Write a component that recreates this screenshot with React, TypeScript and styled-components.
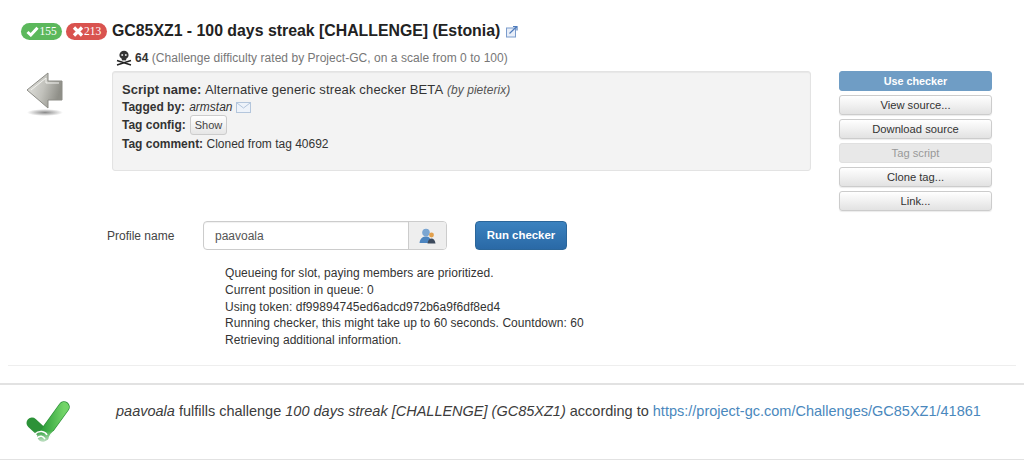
import React from "react";
import styled, { createGlobalStyle } from "styled-components";

const GlobalStyle = createGlobalStyle`
  html, body {
    margin: 0;
    padding: 0;
    background: #fff;
    font-family: "Liberation Sans", Arial, sans-serif;
    font-size: 12px;
    color: #333;
  }
`;

const Page = styled.div`
  width: 1024px;
  height: 460px;
  overflow: hidden;
  box-sizing: border-box;
  padding-top: 22px;
`;

const TitleRow = styled.div`
  display: flex;
  align-items: center;
  height: 18px;
  padding-left: 21px;
`;

const Badge = styled.span<{ $bg: string }>`
  display: inline-flex;
  align-items: center;
  justify-content: center;
  gap: 0;
  width: 41px;
  height: 17px;
  margin-right: 4px;
  border-radius: 9px;
  background: ${(p) => p.$bg};
  color: #fff;
  font-family: "Liberation Serif", serif;
  font-size: 11.5px;
`;

const Title = styled.h1`
  margin: 0 6px 0 1px;
  font-size: 15.85px;
  line-height: 18px;
  font-weight: 700;
  color: #222;
`;

const DifficultyRow = styled.div`
  display: flex;
  align-items: center;
  gap: 3px;
  height: 16px;
  margin-top: 10px;
  padding-left: 116px;
  color: #777;
  letter-spacing: 0.04px;
`;

const Score = styled.b`
  color: #333;
`;

const TopRow = styled.div`
  display: flex;
  margin-top: 5px;
  padding-left: 24px;
`;

const ArrowCol = styled.div`
  width: 88px;
  padding-top: 1px;
`;

const Well = styled.div`
  box-sizing: border-box;
  width: 699px;
  height: 100px;
  padding: 9px 9px 0;
  background: #f3f3f3;
  border: 1px solid #e3e3e3;
  border-radius: 3px;
  box-shadow: inset 0 1px 1px rgba(0, 0, 0, 0.05);
  line-height: 17px;
`;

const ScriptLine = styled.div`
  height: 18px;
  line-height: 17px;
  font-size: 13px;
  letter-spacing: 0.05px;
`;

const ScriptValue = styled.span`
  letter-spacing: 0.15px;
`;

const ScriptBy = styled.i`
  font-size: 12px;
  color: #555;
  letter-spacing: 0.05px;
`;

const WellLine = styled.div`
  display: flex;
  align-items: center;
  gap: 4px;
  min-height: 17px;
`;

const ConfigLine = styled(WellLine)`
  margin: -1px 0 1px;
`;

const ShowButton = styled.span`
  display: inline-block;
  box-sizing: border-box;
  height: 20px;
  padding: 0 4px;
  line-height: 19px;
  font-size: 11px;
  color: #444;
  background: linear-gradient(#fff, #e6e6e6);
  border: 1px solid #ccc;
  border-radius: 3px;
`;

const SideCol = styled.div`
  display: flex;
  flex-direction: column;
  gap: 4px;
  width: 153px;
  margin-left: 28px;
`;

const SideButton = styled.div<{ $variant?: "primary" | "disabled" }>`
  box-sizing: border-box;
  height: 20px;
  line-height: 18px;
  text-align: center;
  font-size: ${(p) => (p.$variant === "primary" ? "10.8px" : "11.2px")};
  border-radius: 3px;
  border: 1px solid
    ${(p) => (p.$variant === "primary" ? "#6f9dc5" : p.$variant === "disabled" ? "#e0e0e0" : "#ccc")};
  color: ${(p) => (p.$variant === "primary" ? "#fff" : p.$variant === "disabled" ? "#999" : "#333")};
  font-weight: ${(p) => (p.$variant === "primary" ? 700 : 400)};
  background: ${(p) =>
    p.$variant === "primary"
      ? "#6f9dc5"
      : p.$variant === "disabled"
        ? "#e8e8e8"
        : "linear-gradient(#fff, #e2e2e2)"};
  box-shadow: ${(p) => (p.$variant ? "none" : "0 1px 1px rgba(0,0,0,0.08)")};
`;

const FormRow = styled.div`
  display: flex;
  align-items: center;
  height: 29px;
  margin-top: 10px;
  padding-left: 107px;
`;

const ProfileLabel = styled.label`
  width: 96px;
  color: #444;
`;

const InputGroup = styled.div`
  display: flex;
  width: 244px;
  height: 29px;
  box-sizing: border-box;
  border: 1px solid #ccc;
  border-radius: 4px;
  overflow: hidden;
  box-shadow: inset 0 1px 1px rgba(0, 0, 0, 0.06);
`;

const ProfileValue = styled.div`
  flex: 1;
  padding-left: 11px;
  line-height: 28px;
  color: #555;
`;

const InputAddon = styled.div`
  display: flex;
  align-items: center;
  justify-content: center;
  width: 37px;
  background: #eee;
  border-left: 1px solid #ccc;
`;

const RunButton = styled.div`
  box-sizing: border-box;
  width: 92px;
  height: 29px;
  margin-left: 28px;
  line-height: 26px;
  text-align: center;
  font-size: 11.4px;
  font-weight: 700;
  color: #fff;
  background: linear-gradient(#3b82bf, #2a69a6);
  border: 1px solid #2b669a;
  border-radius: 4px;
`;

const LogBlock = styled.div`
  margin-top: 15px;
  padding-left: 225px;
  line-height: 16.8px;
  letter-spacing: 0.05px;
`;

const ThinRule = styled.hr`
  height: 1px;
  margin: 16px 8px 0;
  border: 0;
  background: #eee;
`;

const WideRule = styled.hr<{ $gap: number }>`
  height: 2px;
  margin: ${(p) => p.$gap}px 0 0;
  border: 0;
  background: #e2e2e2;
`;

const ResultRow = styled.div`
  display: flex;
  height: 74px;
`;

const CheckCol = styled.div`
  width: 116px;
  padding: 15px 0 0 25px;
  box-sizing: border-box;
`;

const ResultText = styled.p`
  margin: 17px 0 0;
  font-size: 14.5px;
  line-height: 18px;
  white-space: nowrap;
  color: #3c3c3c;
`;

const ResultLink = styled.a`
  color: #4a88bd;
  text-decoration: none;
`;

const CheckGlyph = () => (
  <svg width="13" height="11" viewBox="0 0 13 11">
    <path d="M1.5 6 L4.8 9 L11.5 1.8" fill="none" stroke="#fff" strokeWidth="3" />
  </svg>
);

const CrossGlyph = () => (
  <svg width="12" height="11" viewBox="0 0 12 11">
    <path d="M2 1.5 L10 9.5 M10 1.5 L2 9.5" fill="none" stroke="#fff" strokeWidth="3.2" />
  </svg>
);

const ExternalIcon = () => (
  <svg width="12" height="13" viewBox="0 0 12 13">
    <rect x="0.5" y="3" width="9" height="9" fill="#e8eef8" stroke="#7b9ccc" />
    <path d="M3.5 8.5 L10.5 1.8 M7 1.5 H11 V5.5" fill="none" stroke="#4f7cbc" strokeWidth="1.2" />
  </svg>
);

const SkullIcon = () => (
  <svg width="16" height="16" viewBox="0 0 16 16">
    <ellipse cx="8" cy="5" rx="4.6" ry="4.3" fill="#333" />
    <rect x="5.8" y="8" width="4.4" height="2.4" fill="#333" />
    <circle cx="6.2" cy="5" r="1" fill="#ddd" />
    <circle cx="9.8" cy="5" r="1" fill="#ddd" />
    <path d="M1 10.5 L15 15 M15 10.5 L1 15" stroke="#222" strokeWidth="1.4" />
  </svg>
);

const BackArrow = () => (
  <svg width="42" height="45" viewBox="0 0 42 45">
    <defs>
      <linearGradient id="arrowFill" x1="0" y1="0" x2="1" y2="0.3">
        <stop offset="0" stopColor="#e6e6e2" />
        <stop offset="0.55" stopColor="#c2c2bc" />
        <stop offset="1" stopColor="#8f8f88" />
      </linearGradient>
      <radialGradient id="arrowShadow">
        <stop offset="0" stopColor="#8a8a8a" />
        <stop offset="1" stopColor="#fff" />
      </radialGradient>
    </defs>
    <ellipse cx="21" cy="40.5" rx="18" ry="3.5" fill="url(#arrowShadow)" />
    <path
      d="M3 18 L24 1 V9 H38 V28 H24 V36 Z"
      fill="url(#arrowFill)"
      stroke="#8c8c86"
      strokeWidth="1"
    />
    <path d="M7 18 L22 6 V11 H35" fill="none" stroke="#f2f2ee" strokeWidth="1" />
  </svg>
);

const MailIcon = () => (
  <svg width="15" height="11" viewBox="0 0 15 11">
    <rect x="0.5" y="0.5" width="14" height="10" fill="#eef3fa" stroke="#b4c6dc" />
    <path d="M1 1 L7.5 6 L14 1" fill="none" stroke="#b4c6dc" />
  </svg>
);

const UserIcon = () => (
  <svg width="17" height="16" viewBox="0 0 17 16">
    <circle cx="7" cy="4.5" r="3.8" fill="#7ba6d2" />
    <path d="M0.5 15 C1 10 4 8.5 7 8.5 C10 8.5 12 10 12 15 Z" fill="#4c85c0" />
    <circle cx="12.5" cy="7" r="2.4" fill="#e2a04c" />
    <path d="M8.5 15.5 C9 12 10.5 10.5 12.5 10.5 C14.5 10.5 16 12 16.5 15.5 Z" fill="#3d4a5c" />
  </svg>
);

const BigCheck = () => (
  <svg width="46" height="48" viewBox="0 0 46 48">
    <defs>
      <linearGradient id="checkLong" x1="0" y1="0" x2="1" y2="0">
        <stop offset="0" stopColor="#2fa03c" />
        <stop offset="1" stopColor="#72d468" />
      </linearGradient>
      <linearGradient id="checkFade" x1="0" y1="0" x2="0" y2="1">
        <stop offset="0" stopColor="#fff" stopOpacity="0" />
        <stop offset="1" stopColor="#fff" stopOpacity="1" />
      </linearGradient>
    </defs>
    <line x1="7" y1="23" x2="20" y2="35" stroke="#2c9238" strokeWidth="11" strokeLinecap="round" />
    <line x1="18" y1="36" x2="39" y2="7" stroke="#2c8f38" strokeWidth="11.5" strokeLinecap="round" />
    <line x1="18" y1="36" x2="39" y2="7" stroke="url(#checkLong)" strokeWidth="10" strokeLinecap="round" />
    <rect x="8" y="31" width="30" height="15" fill="url(#checkFade)" />
    <path
      d="M10 34 C14 30 20 31 22 35 M12 38 C15 35 18 36 20 39 M24 40 C24 36 27 32 31 31"
      fill="none"
      stroke="#fff"
      strokeWidth="1.5"
    />
  </svg>
);

const sideButtons: { label: string; variant?: "primary" | "disabled" }[] = [
  { label: "Use checker", variant: "primary" },
  { label: "View source..." },
  { label: "Download source" },
  { label: "Tag script", variant: "disabled" },
  { label: "Clone tag..." },
  { label: "Link..." },
];

const logLines = [
  "Queueing for slot, paying members are prioritized.",
  "Current position in queue: 0",
  "Using token: df99894745ed6adcd972b6a9f6df8ed4",
  "Running checker, this might take up to 60 seconds. Countdown: 60",
  "Retrieving additional information.",
];

export default function App() {
  return (
    <Page>
      <GlobalStyle />
      <TitleRow>
        <Badge $bg="#5cb85c">
          <CheckGlyph />
          155
        </Badge>
        <Badge $bg="#d9534f">
          <CrossGlyph />
          213
        </Badge>
        <Title>GC85XZ1 - 100 days streak [CHALLENGE] (Estonia)</Title>
        <ExternalIcon />
      </TitleRow>
      <DifficultyRow>
        <SkullIcon />
        <span>
          <Score>64</Score> (Challenge difficulty rated by Project-GC, on a scale from 0 to 100)
        </span>
      </DifficultyRow>
      <TopRow>
        <ArrowCol>
          <BackArrow />
        </ArrowCol>
        <Well>
          <ScriptLine>
            <b>Script name:</b> <ScriptValue>Alternative generic streak checker BETA</ScriptValue>{" "}
            <ScriptBy>(by pieterix)</ScriptBy>
          </ScriptLine>
          <WellLine>
            <b>Tagged by:</b> <i>armstan</i> <MailIcon />
          </WellLine>
          <ConfigLine>
            <b>Tag config:</b> <ShowButton>Show</ShowButton>
          </ConfigLine>
          <WellLine>
            <span>
              <b>Tag comment:</b> Cloned from tag 40692
            </span>
          </WellLine>
        </Well>
        <SideCol>
          {sideButtons.map((b) => (
            <SideButton key={b.label} $variant={b.variant}>
              {b.label}
            </SideButton>
          ))}
        </SideCol>
      </TopRow>
      <FormRow>
        <ProfileLabel>Profile name</ProfileLabel>
        <InputGroup>
          <ProfileValue>paavoala</ProfileValue>
          <InputAddon>
            <UserIcon />
          </InputAddon>
        </InputGroup>
        <RunButton>Run checker</RunButton>
      </FormRow>
      <LogBlock>
        {logLines.map((line) => (
          <div key={line}>{line}</div>
        ))}
      </LogBlock>
      <ThinRule />
      <WideRule $gap={17} />
      <ResultRow>
        <CheckCol>
          <BigCheck />
        </CheckCol>
        <ResultText>
          <i>paavoala</i> fulfills challenge <i>100 days streak [CHALLENGE] (GC85XZ1)</i> according to{" "}
          <ResultLink href="#">https://project-gc.com/Challenges/GC85XZ1/41861</ResultLink>
        </ResultText>
      </ResultRow>
      <WideRule $gap={0} />
    </Page>
  );
}
